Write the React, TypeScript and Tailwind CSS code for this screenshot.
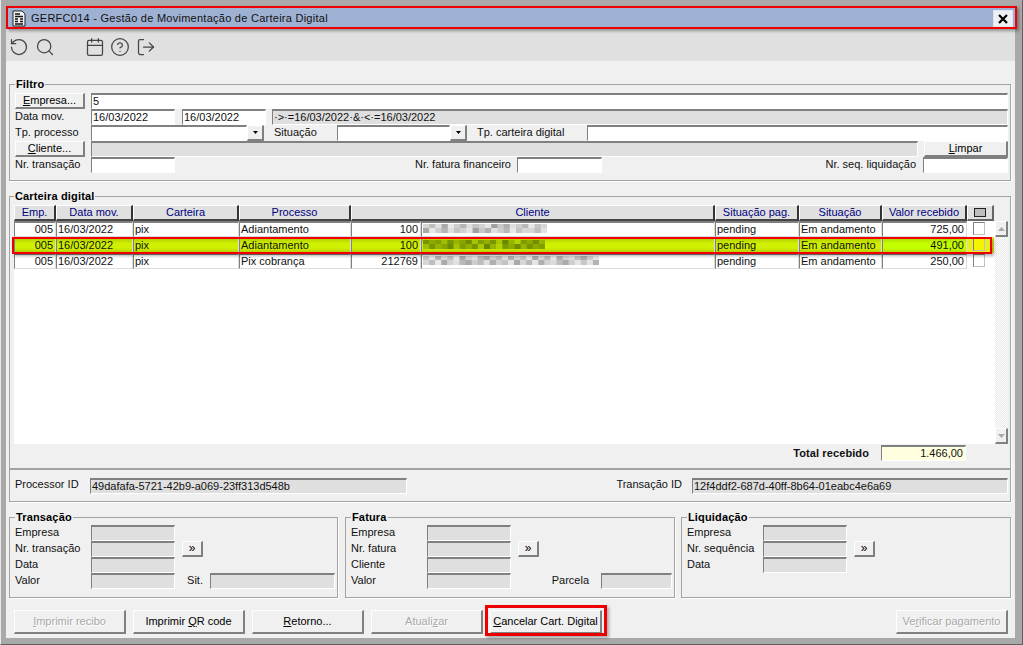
import { LogOut, RotateCcw, Search, Calendar, CircleHelp } from "lucide-react";

const sunken = "border-t-2 border-l border-b border-r border-t-[#808080] border-l-[#808080] border-b-white border-r-white";
const sunkenCell = "border-t-2 border-l border-b border-r border-t-[#808080] border-l-[#808080] border-b-[#dcdcdc] border-r-[#dcdcdc]";

function Field({ w, value = "", gray, right, cls = "" }: { w: string; value?: string; gray?: boolean; right?: boolean; cls?: string }) {
  return (
    <div className={`${w} h-4 shrink-0 ${sunken} ${gray ? "bg-[#dfdfdf]" : "bg-white"} ${right ? "text-right pr-[2px]" : "pl-[1px]"} overflow-hidden whitespace-nowrap leading-[13px] ${cls}`}>
      {value}
    </div>
  );
}

function Btn({ w, h = "h-4", disabled, children }: { w: string; h?: string; disabled?: boolean; children: React.ReactNode }) {
  return (
    <div className={`${w} ${h} shrink-0 flex items-center justify-center bg-[#f0f0f0] border-t border-l border-t-white border-l-white border-r-2 border-b-2 border-r-[#808080] border-b-[#808080] whitespace-nowrap ${disabled ? "text-[#a8a8a8] [text-shadow:1px_1px_0_#fff]" : "text-black"}`}>
      {children}
    </div>
  );
}

function Group({ title, cls, children }: { title: string; cls: string; children: React.ReactNode }) {
  return (
    <fieldset className={`border border-[#a3a3a3] shadow-[1px_1px_0_#fff] min-w-0 ${cls}`}>
      <legend className="px-[1px] font-bold text-[11px] tracking-[0.15px] leading-[11px] text-black">{title}</legend>
      {children}
    </fieldset>
  );
}

function Sub({ title, cls, rows, side, sideW }: { title: string; cls: string; rows: string[]; side?: string; sideW?: string }) {
  return (
    <Group title={title} cls={`h-[86px] pl-[5px] ${cls}`}>
      <div className="flex flex-col pt-[2px]">
        {rows.map((r, i) => (
          <div key={r} className="flex h-4 items-center">
            <div className="w-[76px] shrink-0 pb-[2px]">{r}</div>
            <Field w="w-[84px]" gray />
            {i === 1 && (
              <div className="ml-[7px]">
                <Btn w="w-[21px]"><span className="text-[12px] leading-none pb-[2px]">»</span></Btn>
              </div>
            )}
            {i === 3 && side && (
              <div className="flex flex-1 items-center justify-end pr-[2px]">
                <span className={`pb-[2px] ${title === "Fatura" ? "mr-[12px]" : "mr-[7px]"}`}>{side}</span>
                <Field w={sideW ?? "w-[70px]"} gray />
              </div>
            )}
          </div>
        ))}
      </div>
    </Group>
  );
}

const cols = [
  { label: "Emp.", w: "w-[42px]" },
  { label: "Data mov.", w: "w-[77px]" },
  { label: "Carteira", w: "w-[106px]" },
  { label: "Processo", w: "w-[112px]" },
  { label: "Cliente", w: "w-[364px]" },
  { label: "Situação pag.", w: "w-[84px]" },
  { label: "Situação", w: "w-[83px]" },
  { label: "Valor recebido", w: "w-[85px]" },
];

const rowsData = [
  { code: "100", valor: "725,00", proc: "Adiantamento", w: 124, seed: [214, 190, 226, 170, 232, 205, 180, 222, 196, 210, 228, 160, 200, 176, 224, 205, 184, 232, 196, 215] },
  { code: "100", valor: "491,00", proc: "Adiantamento", w: 122, hi: true, seed: [118, 140, 128, 160, 120, 150, 135, 110, 165, 128, 145, 120, 170, 105, 150, 180, 125, 140, 112, 150] },
  { code: "212769", valor: "250,00", proc: "Pix cobrança", w: 176, seed: [200, 228, 180, 215, 190, 232, 170, 210, 225, 185, 170, 205, 188, 222, 175, 210, 195, 228, 170, 215, 185, 230, 175, 210, 220, 190, 170, 205, 228] },
];

function Mosaic({ w, seed, hi }: { w: number; seed: number[]; hi?: boolean }) {
  const step = w / seed.length;
  const tone = (v: number) => (hi ? `rgb(${v},${v + 30},0)` : `rgb(${v},${v},${v})`);
  return (
    <svg width={w} height={11} className="block">
      {seed.map((v, i) => (
        <g key={i}>
          <rect x={i * step} y={1} width={step + 0.5} height={4} fill={tone(v)} />
          <rect x={i * step} y={5} width={step + 0.5} height={5} fill={tone(seed[(i + 3) % seed.length])} />
        </g>
      ))}
    </svg>
  );
}

function Cell({ w, hi, right, bright, children }: { w: string; hi?: boolean; right?: boolean; bright?: boolean; children: React.ReactNode }) {
  return (
    <div className={`${w} h-4 shrink-0 ${sunkenCell} ${bright ? "bg-[linear-gradient(#b0e000,#c4ff00_35%,#c4ff00_70%,#b0e000)]" : hi ? "bg-[linear-gradient(#b5d200,#cff000_35%,#cff000_70%,#b5d200)]" : "bg-white"} ${right ? "text-right pr-[2px]" : "pl-[1px]"} overflow-hidden whitespace-nowrap leading-[13px]`}>
      {children}
    </div>
  );
}

export default function App() {
  return (
    <div className="relative w-[1023px] h-[645px] bg-[#a9a9a9] border-l border-l-[#e8e8e8] border-r border-b border-r-[#606060] border-b-[#606060] pl-[5px] pr-[7px] pt-[8px] pb-[6px] text-[11px] text-[#111] overflow-hidden" style={{ fontFamily: '"Liberation Sans", Arial, sans-serif' }}>
      <div className="flex h-full flex-col bg-[#f0f0f0]">
        {/* title bar */}
        <div className="flex h-[21px] shrink-0 items-center bg-[#9fb1d3] pl-[5px] pr-[2px]">
          <svg width="16" height="17" viewBox="0 0 16 17" className="shrink-0">
            <path d="M2 1h9l3 3v12H2z" fill="#f4f4f4" stroke="#222" />
            <path d="M4 4h5M4 6.500h8M4 9h3M9 9h3M4 11.500h3M9 11.500h3M4 14h8" stroke="#111" strokeWidth="1.300" />
          </svg>
          <span className="ml-[4px] text-[11px] tracking-[0.26px] text-[#111]">GERFC014 - Gestão de Movimentação de Carteira Digital</span>
          <div className="ml-auto flex h-[17px] w-[20px] items-center justify-center border border-[#dfe4ee] bg-[#eef0f4]">
            <svg width="10" height="10" viewBox="0 0 10 10"><path d="M1 1l8 8M9 1l-8 8" stroke="#000" strokeWidth="2.200" /></svg>
          </div>
        </div>

        {/* toolbar */}
        <div className="flex h-[32px] shrink-0 items-center bg-[#e0e0e0] pt-[4px] text-[#444]">
          <RotateCcw size={20} strokeWidth={1.500} className="ml-[3px]" />
          <Search size={20} strokeWidth={1.500} className="ml-[6px]" />
          <Calendar size={20} strokeWidth={1.500} className="ml-[30px]" />
          <CircleHelp size={20} strokeWidth={1.500} className="ml-[5px]" />
          <LogOut size={20} strokeWidth={1.500} className="ml-[6px]" />
        </div>

        <div className="flex flex-1 flex-col pl-[3px] pr-[4px] pt-[18px]">
          {/* Filtro */}
          <Group title="Filtro" cls="h-[102px] shrink-0 pl-[5px] pr-[2px]">
            <div className="flex flex-col pt-[3px]">
              <div className="flex h-4 items-center">
                <Btn w="w-[70px]"><span><u>E</u>mpresa...</span></Btn>
                <Field w="flex-1 ml-[6px]" value="5" />
              </div>
              <div className="flex h-4 items-center">
                <div className="w-[76px] shrink-0 pb-[2px]">Data mov.</div>
                <Field w="w-[84px]" value="16/03/2022" />
                <Field w="w-[84px] ml-[7px]" value="16/03/2022" />
                <Field w="flex-1 ml-[6px]" gray value="·>·=16/03/2022·&·<·=16/03/2022" />
              </div>
              <div className="flex h-4 items-center">
                <div className="w-[76px] shrink-0 pb-[2px]">Tp. processo</div>
                <Field w="w-[156px]" />
                <Btn w="w-[17px]"><svg width="5" height="3"><path d="M0 0h5L2.500 3z" fill="#000" /></svg></Btn>
                <div className="ml-[10px] w-[63px] shrink-0 pb-[2px]">Situação</div>
                <Field w="w-[113px]" />
                <Btn w="w-[17px]"><svg width="5" height="3"><path d="M0 0h5L2.500 3z" fill="#000" /></svg></Btn>
                <div className="ml-[10px] w-[110px] shrink-0 pb-[2px]">Tp. carteira digital</div>
                <Field w="flex-1" />
              </div>
              <div className="flex h-4 items-center">
                <Btn w="w-[70px]"><span><u>C</u>liente...</span></Btn>
                <Field w="flex-1 ml-[6px]" gray />
                <div className="ml-[6px]"><Btn w="w-[84px]"><span><u>L</u>impar</span></Btn></div>
              </div>
              <div className="flex h-4 items-center">
                <div className="w-[76px] shrink-0 pb-[2px]">Nr. transação</div>
                <Field w="w-[84px]" />
                <div className="w-[342px] shrink-0 pb-[2px] pr-[6px] text-right">Nr. fatura financeiro</div>
                <Field w="w-[85px]" />
                <div className="flex-1 pb-[2px] pr-[7px] text-right">Nr. seq. liquidação</div>
                <Field w="w-[85px]" />
              </div>
            </div>
          </Group>

          {/* Carteira digital */}
          <Group title="Carteira digital" cls="mt-[10px] h-[278px] shrink-0 pl-[4px] pr-[2px]">
            <div className="mt-[3px] h-[239px] bg-white">
              <div className="flex h-[16px] bg-[#f0f0f0]">
                {cols.map((c) => (
                  <div key={c.label} className={`${c.w} shrink-0 flex items-center justify-center bg-[#e0e0e0] border-t border-l border-t-white border-l-white border-r-2 border-b-2 border-r-[#333] border-b-[#444] text-[#000080] whitespace-nowrap`}>
                    {c.label}
                  </div>
                ))}
                <div className="flex w-[27px] shrink-0 items-center justify-center bg-[#e0e0e0] border-t border-l border-t-white border-l-white border-r-2 border-b-2 border-r-[#666] border-b-[#666]">
                  <div className="h-[9px] w-[12px] border border-[#222] bg-[#bdbdbd]" />
                </div>
                <div className="flex-1" />
              </div>
              <div className="flex h-[223px]">
                <div className="flex w-[980px] shrink-0 flex-col">
                  {rowsData.map((r) => (
                    <div key={r.valor} className="flex">
                      <Cell w="w-[42px]" hi={r.hi} right>005</Cell>
                      <Cell w="w-[77px]" hi={r.hi}>16/03/2022</Cell>
                      <Cell w="w-[106px]" hi={r.hi}>pix</Cell>
                      <Cell w="w-[112px]" hi={r.hi}>{r.proc}</Cell>
                      <Cell w="w-[70px]" hi={r.hi} right>{r.code}</Cell>
                      <Cell w="w-[294px]" hi={r.hi}><Mosaic w={r.w} seed={r.seed} hi={r.hi} /></Cell>
                      <Cell w="w-[84px]" hi={r.hi}>pending</Cell>
                      <Cell w="w-[83px]" hi={r.hi}>Em andamento</Cell>
                      <Cell w="w-[85px]" bright={r.hi} right>{r.valor}</Cell>
                      <div className={`flex h-4 w-[27px] shrink-0 items-start justify-center pr-[3px] pt-[1px] ${r.hi ? "bg-[#e8ee20]" : ""}`}>
                        <div className={`h-[13px] w-[12px] border border-[#c0c0c0] border-t-[#808080] border-l-[#808080] ${r.hi ? "bg-[#f4f400]" : "bg-white"}`} />
                      </div>
                    </div>
                  ))}
                </div>
                <div className="ml-[1px] flex w-[13px] shrink-0 flex-col justify-between bg-[repeating-conic-gradient(#e8e8e8_0%_25%,#ffffff_0%_50%)] bg-[length:2px_2px]">
                  <Btn w="w-[13px]"><svg width="7" height="4"><path d="M0 4h7L3.500 0z" fill="#aaa" /></svg></Btn>
                  <Btn w="w-[13px]"><svg width="7" height="4"><path d="M0 0h7L3.500 4z" fill="#aaa" /></svg></Btn>
                </div>
              </div>
            </div>
            <div className="mt-[1px] flex items-center justify-end pr-[42px]">
              <span className="mr-[12px] font-bold tracking-[0.1px]">Total recebido</span>
              <Field w="w-[85px]" right value="1.466,00" cls="!bg-[#ffffe0]" />
            </div>
          </Group>

          {/* Processor / Transacao */}
          <div className="flex h-[33px] shrink-0 items-center border border-[#a3a3a3] shadow-[1px_1px_0_#fff] pl-[5px] pr-[2px]">
            <div className="w-[75px] shrink-0 pb-[2px]">Processor ID</div>
            <Field w="w-[317px]" gray value="49dafafa-5721-42b9-a069-23ff313d548b" />
            <div className="w-[285px] shrink-0 pb-[2px] pr-[10px] text-right">Transação ID</div>
            <Field w="flex-1" gray value="12f4ddf2-687d-40ff-8b64-01eabc4e6a69" />
          </div>

          {/* Sub groups */}
          <div className="mt-[10px] flex shrink-0">
            <Sub title="Transação" cls="w-[329px]" rows={["Empresa", "Nr. transação", "Data", "Valor"]} side="Sit." sideW="w-[125px]" />
            <Sub title="Fatura" cls="ml-[7px] w-[330px]" rows={["Empresa", "Nr. fatura", "Cliente", "Valor"]} side="Parcela" sideW="w-[71px]" />
            <Sub title="Liquidação" cls="ml-[6px] w-[330px]" rows={["Empresa", "Nr. sequência", "Data"]} />
          </div>

          {/* Buttons */}
          <div className="mt-[12px] flex gap-[7px] pl-[5px] pr-[3px]">
            <Btn w="w-[112px]" h="h-[24px]" disabled><span><u>I</u>mprimir recibo</span></Btn>
            <Btn w="w-[112px]" h="h-[24px]"><span>Imprimir <u>Q</u>R code</span></Btn>
            <Btn w="w-[112px]" h="h-[24px]"><span><u>R</u>etorno...</span></Btn>
            <Btn w="w-[112px]" h="h-[24px]" disabled><span>Atuali<u>z</u>ar</span></Btn>
            <Btn w="w-[112px]" h="h-[24px]"><span><u>C</u>ancelar Cart. Digital</span></Btn>
            <div className="ml-auto"><Btn w="w-[112px]" h="h-[24px]" disabled><span>Ve<u>r</u>ificar pagamento</span></Btn></div>
          </div>
        </div>
      </div>

      {/* red annotation boxes */}
      <div className="absolute left-[5px] top-[6px] h-[23px] w-[1011px] border-2 border-[#ee0000] shadow-[2px_2px_3px_rgba(0,0,0,0.35)]" />
      <div className="absolute left-[11px] top-[237px] h-[17px] w-[980px] border-2 border-[#ee0000] shadow-[2px_2px_3px_rgba(0,0,0,0.3)]" />
      <div className="absolute left-[484px] top-[605px] h-[31px] w-[122px] border-[3px] border-[#ee0000] shadow-[2px_2px_3px_rgba(0,0,0,0.3)]" />
    </div>
  );
}
